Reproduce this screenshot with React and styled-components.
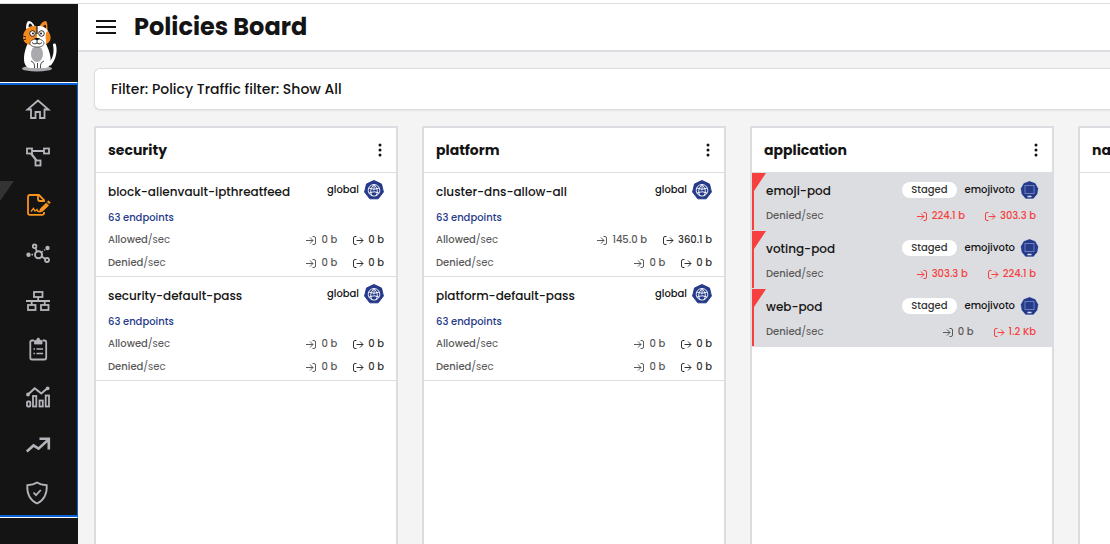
import React from "react";
import styled, { createGlobalStyle } from "styled-components";

const GlobalStyle = createGlobalStyle`
  * {
    box-sizing: border-box;
  }
  body {
    margin: 0;
    background-color: #f4f4f4;
    color: #141414;
    font-family: Poppins, Inter, sans-serif;
    font-size: 10px;
    font-weight: 500;
  }
  button {
    padding: 0;
    border: none;
    background: none;
    color: inherit;
    font: inherit;
    cursor: pointer;
  }
  svg {
    display: block;
    flex-shrink: 0;
  }
`;

const Container = styled.div`
  display: flex;
  height: 100vh;
  overflow: hidden;
  border-top: 3px solid white;
`;

const Sidebar = styled.aside`
  flex: 0 0 78px;
  background-color: #141414;
  border-top: 1px solid #dcdde1;
`;

const Logo = styled.a`
  display: flex;
  justify-content: center;
  height: 78px;
  padding-top: 15px;
`;

const Nav = styled.nav`
  padding-top: 2px;
  border-top: 1px solid white;
  border-bottom: 1px solid white;
  border-right: 1px solid #0b62d6;
  box-shadow: inset 0 2px 0 #0b62d6, inset 0 -2px 0 #0b62d6;
`;

const NavItem = styled.a`
  position: relative;
  display: flex;
  align-items: center;
  justify-content: center;
  height: 48px;
  padding-right: 1px;
  color: ${(props) => (props.$active ? "#f7931e" : "#b4b4ba")};

  &::before {
    content: "";
    display: ${(props) => (props.$active ? "block" : "none")};
    position: absolute;
    top: 0;
    left: 0;
    width: 14px;
    height: 20px;
    background-color: #333333;
    clip-path: polygon(0 0, 100% 0, 0 100%);
  }
`;

const Main = styled.main`
  flex: 1;
  min-width: 0;
  display: flex;
  flex-direction: column;
`;

const Header = styled.header`
  display: flex;
  align-items: center;
  gap: 18px;
  height: 49px;
  padding: 0 18px;
  background-color: white;
  border-top: 1px solid #dcdde1;
  border-bottom: 2px solid #dcdde1;
`;

const Title = styled.h1`
  margin: 0;
  font-size: 24px;
  line-height: 36px;
  font-weight: 700;
`;

const FilterBar = styled.div`
  margin: 16px 0 16px 16px;
  padding: 0 16px;
  line-height: 40px;
  font-size: 14px;
  background-color: white;
  border: 1px solid #dcdde1;
  border-right: none;
  border-radius: 6px 0 0 6px;
  box-shadow: 0 1px 2px #e6e6e8;
`;

const Board = styled.div`
  flex: 1;
  display: flex;
  gap: 24px;
  padding-left: 16px;
  overflow: hidden;
`;

const Tier = styled.section`
  flex: 0 0 304px;
  background-color: white;
  border: 2px solid #dcdde1;
  border-bottom: none;
`;

const TierHeader = styled.div`
  display: flex;
  align-items: center;
  justify-content: space-between;
  height: 45px;
  padding: 0 12px;
  border-bottom: 1px solid #dcdde1;
`;

const TierName = styled.h2`
  margin: 0;
  font-size: 14px;
  font-weight: 700;
`;

const Card = styled.article`
  position: relative;
  padding: 0 12px 2px;
  border-bottom: 1px solid #dcdde1;
`;

const StagedCard = styled.article`
  position: relative;
  padding: 0 13px 5px 14px;
  background-color: #dcdde0;

  &::before {
    content: "";
    position: absolute;
    top: 0;
    bottom: 1px;
    left: 0;
    width: 14px;
    background-color: #f73f3f;
    clip-path: polygon(0 0, 100% 0, 2px 18px, 2px 100%, 0 100%);
  }
`;

const CardTop = styled.div`
  display: flex;
  align-items: center;
  justify-content: space-between;
  height: ${(props) => (props.$staged ? "33px" : "34px")};
`;

const PolicyName = styled.h3`
  margin: 0;
  padding-top: 3px;
  font-size: 12px;
  font-weight: 500;
`;

const Scope = styled.div`
  display: flex;
  align-items: center;
  gap: 5px;
`;

const Staged = styled.span`
  margin-right: 3px;
  padding: 0 9px;
  line-height: 16px;
  border-radius: 8px;
  background-color: white;
  color: #333333;
`;

const Endpoints = styled.a`
  display: block;
  line-height: 21px;
  color: #263a8a;
  text-decoration: none;
`;

const Traffic = styled.div`
  display: flex;
  align-items: center;
  justify-content: space-between;
  height: ${(props) => (props.$staged ? "20px" : "23px")};
  padding-right: ${(props) => (props.$staged ? "3px" : "0")};
  color: #5a5a5a;
`;

const Per = styled.span`
  font-weight: 400;
`;

const Rates = styled.div`
  display: flex;
  gap: ${(props) => (props.$staged ? "20px" : "16px")};
`;

const Rate = styled.span`
  display: flex;
  align-items: center;
  gap: 4px;
  color: ${(props) =>
    props.$alert ? "#f73f3f" : props.$strong ? "#333333" : "#5a5a5a"};
`;

const Cat = () => (
  <svg width="38" height="54" viewBox="0 0 38 54">
    <ellipse cx="17" cy="49.500" rx="15" ry="3" fill="#a9a9ae" />
    <path
      d="M30 45c4-5 6-12 4.500-19"
      fill="none"
      stroke="white"
      strokeWidth="3"
      strokeLinecap="round"
    />
    <path
      d="M8 24C5 30 3 38 4.500 44c.8 3 3 5 6.500 5h13c4 0 6-2 6.500-5 1-7-2-14-5-20z"
      fill="white"
    />
    <ellipse cx="17" cy="35" rx="6" ry="8" fill="#a9a9ae" />
    <path
      d="M11 42c3 1 4 4 3.500 7M24 42c-3 1-4 4-3.500 7M17.500 44v5"
      fill="none"
      stroke="#141414"
      strokeWidth=".8"
    />
    <path d="M6 10C6 5 7 2 9 2s5 3 6 6z" fill="white" />
    <path d="M8.500 8c0-2 .6-3.500 1.500-3.500S12.500 6 12.500 7.500z" fill="#141414" />
    <path d="M19 8c2-4 4.500-6 6.500-6s2 5 2 11z" fill="#f58a1f" />
    <path d="M23 8c1-1.800 2-2.500 2.500-2s.5 2 .5 4z" fill="#141414" />
    <path d="M17 7C8 6 3 12 3 18s5 9 14 8.500z" fill="#f58a1f" />
    <path d="M17 7c9-1 12 5 13 11 .5 5-5 9-13 8.500z" fill="white" />
    <path d="M27 12c3 2 4 5 3.500 8-.5 2.500-2 4-4.500 5 1-4-2-7 1-13z" fill="#f58a1f" />
    <path
      d="M17 20c-4 0-7 2-7 4 0 3 3 4 7 4s7-1 7-4c0-2-3-4-7-4z"
      fill="white"
      stroke="#141414"
      strokeWidth=".6"
    />
    <circle cx="12.500" cy="14.500" r="2.800" fill="white" stroke="#141414" strokeWidth=".9" />
    <circle cx="21.500" cy="14.500" r="2.800" fill="white" stroke="#141414" strokeWidth=".9" />
    <circle cx="13" cy="14.500" r="1" fill="#141414" />
    <circle cx="21" cy="14.500" r="1" fill="#141414" />
    <path d="M17 7v8" stroke="#141414" strokeWidth="1.200" />
    <path d="M14 19h6L17 22z" fill="#141414" />
    <path
      d="M17 22v2M12 23.500c2 2 4 1.500 5 .5 1 1 3 1.500 5-.5M6 18l-3-1M6 20l-3 1"
      fill="none"
      stroke="#141414"
      strokeWidth=".9"
    />
  </svg>
);

const icons = {
  home: <path d="M12 3.500 1.500 12.500H5V21h4.500v-6h4.500v6h4.500v-8.500H22.500z" />,
  graph: (
    <>
      <rect x="1" y="3.500" width="5" height="5" />
      <rect x="18" y="3.500" width="5" height="5" />
      <rect x="9.500" y="15.500" width="5" height="5" />
      <path d="M6 6h12M5 8.500l5.500 7" strokeWidth="2.200" />
    </>
  ),
  policies: (
    <>
      <path d="M18 9V7l-5-5H4Q2 2 2 4v16q0 1.800 2 1.800h12q2 0 2-1.800v-1" />
      <path d="M12 2v4q0 2 2 2h4" />
      <path d="m5 18.500 2.500-3 1.500 2.500 2-1.500 1 2h3" strokeWidth="1.400" />
      <path
        d="m13.500 19 .8-3.300 6-5.700 2.400 2.400-6 5.800zM21.300 8.800l1.200-1 1.800 1.800-1.200 1.200z"
        fill="currentColor"
        strokeWidth=".6"
      />
    </>
  ),
  endpoints: (
    <>
      <circle cx="12.500" cy="13.700" r="3.500" strokeWidth="2" />
      <circle cx="8.600" cy="5.300" r="1.800" />
      <circle cx="21" cy="19" r="2" />
      <circle cx="21.500" cy="7" r="2.200" fill="currentColor" stroke="none" />
      <circle cx="2.500" cy="13.700" r="2.200" fill="currentColor" stroke="none" />
      <path d="m9.500 7 1.500 3.500M15.800 15.500l3.500 2.500" />
      <path d="M5.500 13.700h1.500M15.800 11l1-.8M18.200 9.300l.8-.6" />
    </>
  ),
  network: (
    <>
      <rect x="8" y="3" width="8.500" height="5" />
      <rect x="2" y="16" width="7.500" height="5" />
      <rect x="15" y="16" width="7.500" height="5" />
      <path d="M0 12h24M12.200 8v4M5.700 12v4M18.700 12v4" />
    </>
  ),
  clipboard: (
    <>
      <path d="M8 3.500H6q-1.700 0-1.700 1.700v15.600q0 1.700 1.700 1.700h12.500q1.700 0 1.700-1.700V5.200q0-1.700-1.700-1.700h-2" />
      <path
        d="M8.500 7V3.500h2Q10.800 1 12.300 1T14 3.500h2V7z"
        fill="currentColor"
        strokeWidth=".8"
      />
      <path d="M7.500 12H9M10.500 12h6.500M7.500 16.500H9M10.500 16.500h6.500" strokeWidth="1.500" />
    </>
  ),
  stats: (
    <>
      <rect x="1" y="16.500" width="3.300" height="5" rx="1" />
      <rect x="7" y="11" width="3.300" height="10.500" />
      <rect x="13.500" y="15.500" width="3.300" height="6" />
      <rect x="19.700" y="10.500" width="3.300" height="11" />
      <path d="m2 9.500 6.700-6.300L15.300 8.500l6.400-5.500" strokeWidth="2" />
      <circle cx="2" cy="9.500" r="1" />
      <circle cx="21.700" cy="3.300" r="1" />
    </>
  ),
  trend: (
    <path
      d="m.8 18.500 6.700-6 5 3.200L22 7M13.500 5.700h9.300V16.500"
      strokeWidth="2.600"
    />
  ),
  shield: (
    <>
      <path d="M11 1.500c3 2 6.500 2.500 9.700 2.700.5 9-2.500 14.800-9.700 18.300C3.800 19 .8 13.200 1.300 4.200 4.500 4 8 3.500 11 1.500z" />
      <path d="m7.500 11.500 2.500 2.700 4.800-5.200" />
    </>
  ),
};

const Icon = ({ name }) => (
  <svg
    width="24"
    height="24"
    viewBox="0 0 24 24"
    fill="none"
    stroke="currentColor"
    strokeWidth="1.800"
    overflow="visible"
  >
    {icons[name]}
  </svg>
);

const InIcon = () => (
  <svg width="11" height="10" viewBox="0 0 11 10" fill="none" stroke="currentColor">
    <path d="M0 5.500h7M4 2.500l3 3-3 3M6.500 1.500H8q1.500 0 1.500 1.500v5q0 1.500-1.500 1.500H6.500" />
  </svg>
);

const OutIcon = () => (
  <svg width="11" height="10" viewBox="0 0 11 10" fill="none" stroke="currentColor">
    <path d="M3.500 5.500H10M7 2.500l3 3-3 3M3.500 1.500H2Q.5 1.500.5 3v5q0 1.500 1.500 1.500h1.500" />
  </svg>
);

const GlobalBadge = () => (
  <svg width="20" height="20" viewBox="0 0 20 20">
    <path
      d="M10 .5 17.500 4l1.900 8-5.200 6.800H5.800L.6 12l1.900-8z"
      fill="#263a8a"
      stroke="#263a8a"
      strokeLinejoin="round"
    />
    <g fill="none" stroke="white" strokeWidth=".9">
      <circle cx="10" cy="10.300" r="5.800" />
      <path d="M10 4.500v5.800M4.600 8q5.400 2.500 10.800 0M4.800 13q5.200-2.500 10.400 0M10 4.500Q4.500 10 8 16M10 4.500q5.500 5.500 2 11.500" />
    </g>
  </svg>
);

const NamespaceBadge = () => (
  <svg width="19" height="20" viewBox="0 0 19 20">
    <path
      d="M9.500 .8 15.500 3l3 5.500-.8 5.500-4.200 5h-8l-4.200-5L.5 8.500l3-5.500z"
      fill="#263a8a"
      stroke="#eef0f8"
      strokeWidth=".6"
    />
    <rect
      x="5"
      y="5.500"
      width="9"
      height="8"
      fill="none"
      stroke="#7485c4"
      strokeWidth=".9"
    />
    <path d="M7.500 16.500h4" stroke="#dfe3f4" strokeWidth="1.500" />
  </svg>
);

const Kebab = () => (
  <svg width="8" height="14" viewBox="0 0 8 14" fill="#141414">
    <circle cx="4" cy="2" r="1.500" />
    <circle cx="4" cy="7" r="1.500" />
    <circle cx="4" cy="12" r="1.500" />
  </svg>
);

const navItems = [
  { icon: "home", label: "Home" },
  { icon: "graph", label: "Service Graph" },
  { icon: "policies", label: "Policies" },
  { icon: "endpoints", label: "Endpoints" },
  { icon: "network", label: "Network Sets" },
  { icon: "clipboard", label: "Compliance" },
  { icon: "stats", label: "Statistics" },
  { icon: "trend", label: "Trends" },
  { icon: "shield", label: "Threats" },
];

const zero = { in: "0 b", out: "0 b" };

const tiers = [
  {
    name: "security",
    policies: [
      { name: "block-alienvault-ipthreatfeed", allowed: zero, denied: zero },
      { name: "security-default-pass", allowed: zero, denied: zero },
    ],
  },
  {
    name: "platform",
    policies: [
      {
        name: "cluster-dns-allow-all",
        allowed: { in: "145.0 b", out: "360.1 b" },
        denied: zero,
      },
      { name: "platform-default-pass", allowed: zero, denied: zero },
    ],
  },
  {
    name: "application",
    policies: [
      { name: "emoji-pod", staged: true, denied: { in: "224.1 b", out: "303.3 b" } },
      { name: "voting-pod", staged: true, denied: { in: "303.3 b", out: "224.1 b" } },
      { name: "web-pod", staged: true, denied: { in: "0 b", out: "1.2 Kb" } },
    ],
  },
  { name: "na", policies: [] },
];

const TrafficRow = ({ label, rate, staged }) => (
  <Traffic $staged={staged}>
    <span>
      {label}
      <Per>/sec</Per>
    </span>
    <Rates $staged={staged}>
      <Rate $alert={staged && rate.in !== "0 b"}>
        <InIcon />
        {rate.in}
      </Rate>
      <Rate $strong $alert={staged && rate.out !== "0 b"}>
        <OutIcon />
        {rate.out}
      </Rate>
    </Rates>
  </Traffic>
);

const Policy = ({ policy }) => {
  if (policy.staged) {
    return (
      <StagedCard>
        <CardTop $staged>
          <PolicyName>{policy.name}</PolicyName>
          <Scope>
            <Staged>Staged</Staged>
            emojivoto
            <NamespaceBadge />
          </Scope>
        </CardTop>
        <TrafficRow label="Denied" rate={policy.denied} staged />
      </StagedCard>
    );
  }
  return (
    <Card>
      <CardTop>
        <PolicyName>{policy.name}</PolicyName>
        <Scope>
          global
          <GlobalBadge />
        </Scope>
      </CardTop>
      <Endpoints href="#endpoints">63 endpoints</Endpoints>
      <TrafficRow label="Allowed" rate={policy.allowed} />
      <TrafficRow label="Denied" rate={policy.denied} />
    </Card>
  );
};

const App = () => {
  return (
    <>
      <GlobalStyle />
      <Container>
        <Sidebar>
          <Logo href="#" aria-label="Home page">
            <Cat />
          </Logo>
          <Nav>
            {navItems.map((item) => (
              <NavItem
                key={item.icon}
                href={`#${item.icon}`}
                aria-label={item.label}
                $active={item.icon === "policies"}
              >
                <Icon name={item.icon} />
              </NavItem>
            ))}
          </Nav>
        </Sidebar>
        <Main>
          <Header>
            <button aria-label="Toggle menu">
              <svg width="20" height="16" viewBox="0 0 20 16" fill="#141414">
                <path d="M0 1h20v2H0zM0 7h20v2H0zM0 13h20v2H0z" />
              </svg>
            </button>
            <Title>Policies Board</Title>
          </Header>
          <FilterBar>Filter: Policy Traffic filter: Show All</FilterBar>
          <Board>
            {tiers.map((tier) => (
              <Tier key={tier.name}>
                <TierHeader>
                  <TierName>{tier.name}</TierName>
                  <button aria-label={`${tier.name} options`}>
                    <Kebab />
                  </button>
                </TierHeader>
                {tier.policies.map((policy) => (
                  <Policy key={policy.name} policy={policy} />
                ))}
              </Tier>
            ))}
          </Board>
        </Main>
      </Container>
    </>
  );
};

export default App;
